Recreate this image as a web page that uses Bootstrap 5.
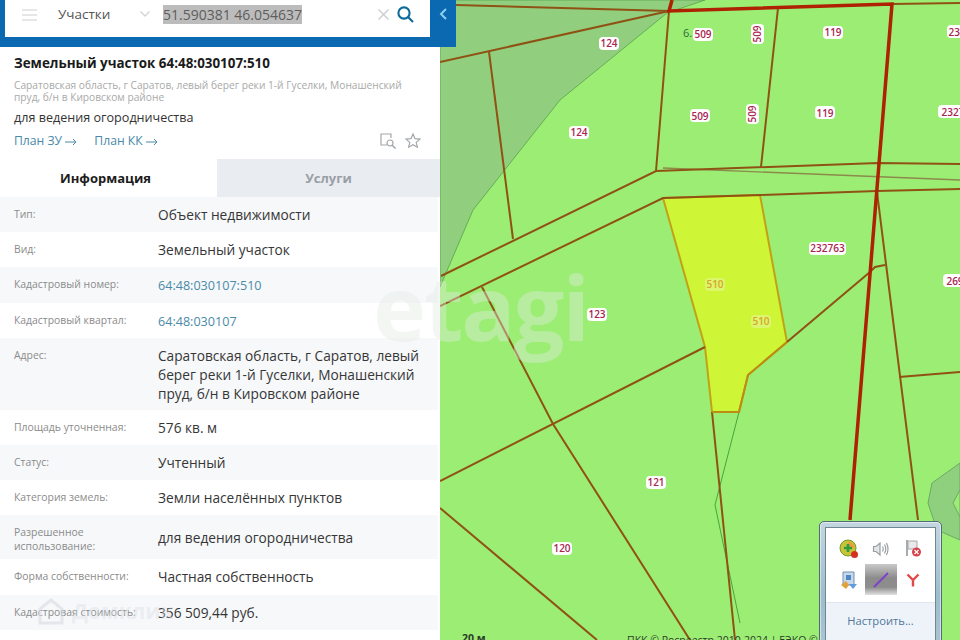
<!DOCTYPE html>
<html lang="ru">
  <head>
    <meta charset="UTF-8" />
    <meta name="viewport" content="width=device-width, initial-scale=1.0" />
    <title>Земельный участок 64:48:030107:510</title>
    <link
      href="https://cdn.jsdelivr.net/npm/bootstrap@5.3.0/dist/css/bootstrap.min.css"
      rel="stylesheet"
    />
    <style>
      body {
        font-family: "Open Sans", "Noto Sans", sans-serif;
        overflow: hidden;
        background: #9bee73;
      }
      .page-wrap {
        width: 960px;
        height: 640px;
      }
      /* left panel */
      .side-panel {
        width: 440px;
        flex: 0 0 440px;
        background: #fff;
        position: relative;
        z-index: 2;
      }
      .top-bar {
        width: 456px;
        height: 47px;
        background: #0a69b0;
        padding-bottom: 10px;
        padding-left: 5px;
      }
      .search-box {
        width: 425px;
        background: #fff;
        color: #555;
        font-size: 13.5px;
        padding-bottom: 9px;
      }
      .burger {
        width: 15px;
        margin-left: 17px;
      }
      .burger span {
        display: block;
        height: 2px;
        background: #e6e6e6;
        margin-bottom: 3px;
      }
      .layer-name {
        margin-left: 21px;
        width: 82px;
      }
      .coords-sel {
        background: #bcbcbc;
        color: #5d5d5d;
        font-size: 14px;
        line-height: 19px;
        margin-left: 13px;
        width: 139px;
        white-space: nowrap;
      }
      .hide-btn {
        width: 26px;
        padding-bottom: 9px;
      }
      .head-block {
        padding: 7px 14px 0;
        height: 112px;
      }
      .plot-title {
        font-size: 13.4px;
        font-weight: 700;
        color: #1a1a1a;
        line-height: 18px;
        margin: 0 0 7px;
      }
      .plot-addr {
        font-size: 10.2px;
        line-height: 12px;
        color: #a9a9a9;
        margin-bottom: 6px;
      }
      .plot-use {
        font-size: 12.6px;
        line-height: 17px;
        color: #333;
        margin-bottom: 6px;
      }
      .plan-link {
        font-size: 12.2px;
        color: #4a8aa8;
        text-decoration: none;
        line-height: 17px;
        margin-right: 17px;
      }
      .head-tools {
        margin-right: 5px;
      }
      .tab-strip .nav-link {
        height: 38px;
        padding: 0;
        border-radius: 0;
        font-size: 13px;
        font-weight: 700;
        line-height: 38px;
        text-align: center;
      }
      .tab-on {
        width: 217px;
        padding-right: 6px !important;
        color: #1c1c1c;
        background: #fff;
      }
      .tab-off {
        width: 223px;
        color: #9a9fa5;
        background: #e9ecf1;
      }
      .info-row {
        padding-right: 2px;
      }
      .info-row:nth-child(odd) > div {
        background: #f6f8fa;
      }
      .info-line {
        min-height: 35.2px;
        align-items: flex-start;
      }
      .info-key {
        width: 158px;
        flex: 0 0 158px;
        padding: 10px 0 0 14px;
        font-size: 10.4px;
        line-height: 14px;
        color: #8b8b8b;
      }
      .info-val {
        padding: 8px 8px 7px 0;
        font-size: 13.7px;
        line-height: 19px;
        color: #363636;
      }
      .info-val a {
        color: #4a8aa8;
        text-decoration: none;
        font-size: 12.6px;
      }
      .val-tall {
        padding-top: 13px;
        padding-bottom: 12px;
      }
      /* map */
      .map-area {
        flex: 0 0 520px;
        width: 520px;
        height: 640px;
        position: relative;
        background: #9bee73;
      }
      .map-svg {
        display: block;
      }
      .map-svg .lbl {
        font-family: "Open Sans", sans-serif;
        font-size: 10px;
        font-weight: 600;
        fill: #a8254f;
        text-anchor: middle;
      }
      .map-svg .lbl-y {
        fill: #d9a52a;
      }
      .map-svg .tag {
        fill: #fff;
      }
      .map-svg .foot {
        font-family: "Open Sans", sans-serif;
        font-size: 10.5px;
        fill: #2e3a2a;
      }
      /* watermarks */
      .mark-etagi {
        position: absolute;
        left: 373px;
        top: 256px;
        z-index: 3;
        font-size: 90px;
        line-height: 100px;
        font-weight: 700;
        letter-spacing: -2px;
        color: rgba(228, 232, 228, 0.4);
        pointer-events: none;
      }
      .mark-dom {
        position: absolute;
        left: 38px;
        top: 597px;
        z-index: 3;
        font-size: 21px;
        line-height: 28px;
        font-weight: 700;
        color: rgba(215, 220, 226, 0.4);
      }
      /* windows tray popup */
      .tray-pop {
        position: absolute;
        left: 819px;
        top: 521px;
        width: 123px;
        height: 125px;
        z-index: 4;
        padding: 5px 5px 0;
        border: 1px solid #4f6b76;
        border-radius: 5px 5px 0 0;
        background: linear-gradient(#c4d6e0, #9ebccb 60%, #aac5d2);
        box-shadow: inset 0 0 0 1px rgba(255, 255, 255, 0.5);
      }
      .tray-inner {
        background: #fff;
        height: 115px;
        border: 1px solid #6f8792;
        border-bottom: 0;
      }
      .tray-grid {
        display: grid;
        grid-template-columns: repeat(3, 32px);
        grid-auto-rows: 31px;
        justify-content: center;
        column-gap: 0;
        padding-top: 5px;
        height: 74px;
      }
      .tray-cell {
        display: flex;
        align-items: center;
        justify-content: center;
      }
      .tray-cell-on {
        background: linear-gradient(#c9c9c9, #8c8c8c 45%, #8d8d8d 75%, #e0e0e0);
      }
      .tray-foot {
        background: #eef3fa;
        border-top: 1px solid #dde6f0;
        height: 40px;
        font-size: 11.2px;
        line-height: 36px;
        text-align: center;
        color: #4f7699;
      }
    </style>
  </head>
  <body>
    <div class="page-wrap d-flex">
      <aside class="side-panel">
        <div class="top-bar d-flex">
          <div class="search-box d-flex align-items-center">
            <div class="burger pt-1"><span></span><span></span><span></span></div>
            <div class="layer-name">Участки</div>
            <svg width="10" height="6" viewBox="0 0 10 6" fill="none" stroke="#cfd3d6" stroke-width="1.3">
              <path d="M0.5 0.5 5 5 9.5 0.5" />
            </svg>
            <div class="coords-sel">51.590381 46.054637</div>
            <svg class="ms-auto" width="11" height="11" viewBox="0 0 11 11" stroke="#c9cccf" stroke-width="1.4">
              <path d="M0.5 0.5 10.5 10.5M10.5 0.5 0.5 10.5" />
            </svg>
            <svg class="ms-2 me-3" width="17" height="17" viewBox="0 0 17 17" fill="none" stroke="#0c6a9a" stroke-width="2.1">
              <circle cx="7" cy="7" r="5.6" />
              <path d="M11 11 16 16" />
            </svg>
          </div>
          <div class="hide-btn d-flex justify-content-center align-items-center">
            <svg width="8" height="12" viewBox="0 0 8 12" fill="none" stroke="#8ccdf0" stroke-width="2">
              <path d="M7 1 2 6 7 11" />
            </svg>
          </div>
        </div>

        <div class="head-block">
          <h1 class="plot-title">Земельный участок 64:48:030107:510</h1>
          <div class="plot-addr">Саратовская область, г Саратов, левый берег реки 1-й Гуселки, Монашенский пруд, б/н в Кировском районе</div>
          <div class="plot-use">для ведения огородничества</div>
          <div class="d-flex align-items-center">
            <a class="plan-link" href="#">План ЗУ
              <svg width="12" height="8" viewBox="0 0 12 8" fill="none" stroke="#4a8aa8"><path d="M0 4H11M8 1 11 4 8 7" /></svg>
            </a>
            <a class="plan-link" href="#">План КК
              <svg width="12" height="8" viewBox="0 0 12 8" fill="none" stroke="#4a8aa8"><path d="M0 4H11M8 1 11 4 8 7" /></svg>
            </a>
            <div class="head-tools ms-auto d-flex align-items-center gap-2">
              <svg width="17" height="16" viewBox="0 0 17 16" fill="none" stroke="#a3a8ac" stroke-width="1.2">
                <path d="M7 12H1V1H11V5" />
                <circle cx="10" cy="10" r="3" />
                <path d="M12.2 12.2 15.5 15.5" stroke-width="1.6" />
              </svg>
              <svg width="16" height="15" viewBox="0 0 16 15" fill="none" stroke="#a3a8ac" stroke-width="1.2">
                <path d="M8 1 10 5.6 15 6.1 11.2 9.4 12.4 14.2 8 11.7 3.6 14.2 4.8 9.4 1 6.1 6 5.6Z" />
              </svg>
            </div>
          </div>
        </div>

        <nav class="nav tab-strip">
          <a class="nav-link tab-on" href="#">Информация</a>
          <a class="nav-link tab-off" href="#">Услуги</a>
        </nav>

        <div>
          <div class="info-row"><div class="info-line d-flex"><div class="info-key">Тип:</div><div class="info-val">Объект недвижимости</div></div></div>
          <div class="info-row"><div class="info-line d-flex"><div class="info-key">Вид:</div><div class="info-val">Земельный участок</div></div></div>
          <div class="info-row"><div class="info-line d-flex"><div class="info-key">Кадастровый номер:</div><div class="info-val"><a href="#">64:48:030107:510</a></div></div></div>
          <div class="info-row"><div class="info-line d-flex"><div class="info-key">Кадастровый квартал:</div><div class="info-val"><a href="#">64:48:030107</a></div></div></div>
          <div class="info-row"><div class="info-line d-flex"><div class="info-key">Адрес:</div><div class="info-val">Саратовская область, г Саратов, левый берег реки 1-й Гуселки, Монашенский пруд, б/н в Кировском районе</div></div></div>
          <div class="info-row"><div class="info-line d-flex"><div class="info-key">Площадь уточненная:</div><div class="info-val">576 кв. м</div></div></div>
          <div class="info-row"><div class="info-line d-flex"><div class="info-key">Статус:</div><div class="info-val">Учтенный</div></div></div>
          <div class="info-row"><div class="info-line d-flex"><div class="info-key">Категория земель:</div><div class="info-val">Земли населённых пунктов</div></div></div>
          <div class="info-row"><div class="info-line d-flex"><div class="info-key">Разрешенное использование:</div><div class="info-val val-tall">для ведения огородничества</div></div></div>
          <div class="info-row"><div class="info-line d-flex"><div class="info-key">Форма собственности:</div><div class="info-val">Частная собственность</div></div></div>
          <div class="info-row"><div class="info-line d-flex"><div class="info-key">Кадастровая стоимость:</div><div class="info-val">356 509,44 руб.</div></div></div>
        </div>
      </aside>

      <section class="map-area">
        <svg class="map-svg" width="520" height="640" viewBox="440 0 520 640" fill="none">
          <rect x="440" y="0" width="520" height="640" fill="#9bee73" />
          <!-- forest areas -->
          <path d="M440 0H705L667 13 560 100 473 210 440 287Z" fill="#91cf7f" stroke="#4f9a45" stroke-width="0.7" />
          <path d="M960 463 932 483 928 503 937 530 960 540Z" fill="#8fd07f" stroke="#6fa868" />
          <path d="M960 490 953 503 960 517Z" fill="#9bee73" stroke="#6fa868" />
          <!-- selected plot -->
          <path d="M663 198 760 195 787 342 748 375 739 412 712 412 705 347Z" fill="#cff537" stroke="#c2a214" stroke-width="2" />
          <!-- thin green line -->
          <path d="M739 412 715 505 740 623" stroke="#3f9a3a" stroke-width="0.9" />
          <path d="M663 168 960 180" stroke="#8c8a4c" stroke-width="1.3" />
          <!-- parcels -->
          <g stroke="#8f5214" stroke-width="2">
            <path d="M456 5 669 11" />
            <path d="M440 62 669 11" />
            <path d="M489 52 513 239" />
            <path d="M669 11 656 171" />
            <path d="M778 8 761 167" />
            <path d="M441 276 656 171 878 163 960 164" />
            <path d="M440 306 663 198 760 195 877 191 960 189" />
            <path d="M892 4 960 3" />
            <path d="M877 192 918 520" />
            <path d="M787 342 870 272 875 267 885 265" />
            <path d="M899 377 960 372" />
            <path d="M705 347 440 481" />
            <path d="M482 287 553 424 690 640" />
            <path d="M440 508 597 640" />
            <path d="M712 412 735 640" />
            <path d="M787 342 748 375 739 412 712 412" stroke="#bb8e12" />
          </g>
          <!-- thick boundary -->
          <g stroke="#ae2103" stroke-width="3.5">
            <path d="M672 0 669 11 892 4 850 520" />
          </g>

          <g>
            <rect class="tag" x="599" y="37" width="20" height="13" rx="4" /><text class="lbl" x="609" y="47">124</text>
            <rect class="tag" x="569" y="126" width="20" height="13" rx="4" /><text class="lbl" x="579" y="136">124</text>
            <text x="683" y="37" font-size="11" fill="#2f6a3a">6.</text>
            <rect class="tag" x="693" y="28" width="20" height="13" rx="4" /><text class="lbl" x="703" y="38">509</text>
            <rect class="tag" x="751" y="24" width="13" height="20" rx="4" /><text class="lbl" x="0" y="0" transform="translate(761 34) rotate(-90)">509</text>
            <rect class="tag" x="690" y="109" width="20" height="13" rx="4" /><text class="lbl" x="700" y="120">509</text>
            <rect class="tag" x="746" y="104" width="13" height="20" rx="4" /><text class="lbl" x="0" y="0" transform="translate(756 114) rotate(-90)">509</text>
            <rect class="tag" x="823" y="26" width="20" height="13" rx="4" /><text class="lbl" x="833" y="36">119</text>
            <rect class="tag" x="815" y="106" width="20" height="13" rx="4" /><text class="lbl" x="825" y="117">119</text>
            <rect class="tag" x="947" y="25" width="20" height="13" rx="4" /><text class="lbl" x="957" y="36">233</text>
            <rect class="tag" x="938" y="105" width="30" height="13" rx="4" /><text class="lbl" x="953" y="116">2327</text>
            <rect class="tag" x="809" y="242" width="37" height="13" rx="4" /><text class="lbl" x="827.500" y="252">232763</text>
            <rect class="tag" x="943" y="274" width="24" height="13" rx="4" /><text class="lbl" x="955" y="285">269</text>
            <rect class="tag" x="587" y="308" width="20" height="13" rx="4" /><text class="lbl" x="597" y="318">123</text>
            <rect class="tag" x="646" y="476" width="20" height="13" rx="4" /><text class="lbl" x="656" y="486">121</text>
            <rect class="tag" x="552" y="542" width="20" height="13" rx="4" /><text class="lbl" x="562" y="552">120</text>
            <rect x="705" y="278" width="20" height="13" rx="4" fill="#dcf66e" /><text class="lbl lbl-y" x="715" y="288">510</text>
            <rect x="751" y="315" width="20" height="13" rx="4" fill="#dcf66e" /><text class="lbl lbl-y" x="761" y="325">510</text>
          </g>
          <text class="foot" x="462" y="642" font-weight="700">20 м</text>
          <text class="foot" x="627" y="644">ПКК © Росреестр 2010-2024 | ЕЭКО ©</text>
        </svg>
      </section>
    </div>

    <div class="mark-etagi">etagi</div>
    <div class="mark-dom d-flex align-items-center gap-2">
      <svg width="26" height="28" viewBox="0 0 26 28" fill="none" stroke="rgba(215,220,226,.6)" stroke-width="3"><path d="M2 12 13 3 24 12V26H2Z" /></svg>
      <span>Домклик</span>
    </div>

    <div class="tray-pop">
      <div class="tray-inner">
        <div class="tray-grid">
          <div class="tray-cell">
            <svg width="20" height="20" viewBox="0 0 20 20">
              <circle cx="9" cy="9" r="8" fill="#c9c436" stroke="#6f9b2a" />
              <path d="M9 2.500A6.500 6.500 0 0 1 15.500 9H9Z" fill="#e8a13a" />
              <path d="M9 5V13M5 9H13" stroke="#2f9a3f" stroke-width="2.600" />
              <circle cx="15.500" cy="15.500" r="3.500" fill="#d5301f" />
            </svg>
          </div>
          <div class="tray-cell">
            <svg width="18" height="18" viewBox="0 0 18 18" fill="none" stroke="#9aa0a3" stroke-width="1.200">
              <path d="M1.500 6.500H4L8 3V15L4 11.500H1.500Z" fill="#e3e5e6" />
              <path d="M10.500 6.500Q12 9 10.500 11.500M12.500 4.500Q15 9 12.500 13.500M14.500 3Q17.500 9 14.500 15" />
            </svg>
          </div>
          <div class="tray-cell">
            <svg width="18" height="19" viewBox="0 0 18 19">
              <path d="M3 1V17" stroke="#8b8f93" stroke-width="1.500" />
              <path d="M4 2H13V10H4Z" fill="#e9e9ea" stroke="#a5a8ab" />
              <circle cx="12.500" cy="13" r="4.500" fill="#d9404a" />
              <path d="M10.500 11 14.500 15M14.500 11 10.500 15" stroke="#fff" stroke-width="1.300" />
            </svg>
          </div>
          <div class="tray-cell">
            <svg width="18" height="20" viewBox="0 0 18 20">
              <path d="M3 2H14V15H3Z" fill="#c8d8e8" stroke="#6f8fb5" />
              <path d="M6 5H11V10H6Z" fill="#4f86c6" />
              <path d="M1 15 6 11 9 15 6 19Z" fill="#e2a13f" />
              <path d="M9 14 17 14 13 19Z" fill="#5d9ed8" />
            </svg>
          </div>
          <div class="tray-cell tray-cell-on">
            <svg width="20" height="20" viewBox="0 0 20 20">
              <path d="M3 17 17 3" stroke="#7e3fd0" stroke-width="1.800" />
            </svg>
          </div>
          <div class="tray-cell">
            <svg width="14" height="14" viewBox="0 0 14 14" fill="none" stroke="#e24a4a" stroke-width="2.400">
              <path d="M1.500 1.500 7 7 12.500 1.500M7 7V13.500" />
            </svg>
          </div>
        </div>
        <div class="tray-foot">Настроить...</div>
      </div>
    </div>

    <script src="https://cdn.jsdelivr.net/npm/bootstrap@5.3.0/dist/js/bootstrap.bundle.min.js"></script>
  </body>
</html>
